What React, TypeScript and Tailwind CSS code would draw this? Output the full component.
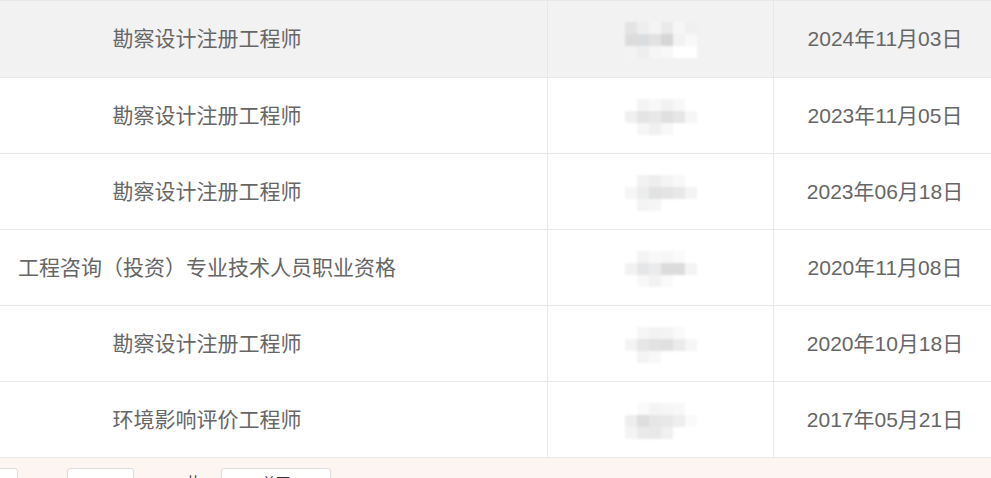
import React from "react";

const mosaics: string[][][] = [
  [
    ["#e4e4e4", "#eeeeee", "#f4f4f4", "#eaeaea", "#f6f6f6", "#f0f0f0"],
    ["#dcdcdc", "#dadde0", "#e2e2e2", "#d6d6d6", "#f2f2f2", "#f8f8f8"],
    ["#f3f3f3", "#eeeeee", "#f5f5f5", "#f8f8f8", "#ffffff", "#ffffff"],
  ],
  [
    ["#ffffff", "#f4f4f4", "#f8f8f8", "#f2f2f2", "#f8f8f8", "#ffffff"],
    ["#f0f0f0", "#e4e4e4", "#e8e8e8", "#e0e0e0", "#e6e6e6", "#f6f6f6"],
    ["#ffffff", "#f6f6f6", "#f0f0f0", "#f8f8f8", "#ffffff", "#ffffff"],
  ],
  [
    ["#ffffff", "#f2f2f2", "#eeeeee", "#f4f4f4", "#f8f8f8", "#ffffff"],
    ["#f6f6f6", "#ececec", "#e0e2e4", "#e4e4e4", "#e8e8e8", "#f4f4f4"],
    ["#ffffff", "#f4f4f4", "#f6f6f6", "#ffffff", "#ffffff", "#ffffff"],
  ],
  [
    ["#ffffff", "#f4f4f4", "#f8f8f8", "#f6f6f6", "#fafafa", "#ffffff"],
    ["#f2f2f2", "#e4e6e8", "#ebebeb", "#dcdcdc", "#dcdcdc", "#f4f4f4"],
    ["#ffffff", "#f8f8f8", "#f2f2f2", "#fafafa", "#ffffff", "#ffffff"],
  ],
  [
    ["#ffffff", "#f6f6f6", "#f2f2f2", "#f4f4f4", "#fafafa", "#ffffff"],
    ["#f4f4f4", "#e6e6e6", "#e2e2e2", "#e0e0e0", "#ebebeb", "#f6f6f6"],
    ["#ffffff", "#f4f4f4", "#f8f8f8", "#ffffff", "#ffffff", "#ffffff"],
  ],
  [
    ["#ffffff", "#fafafa", "#f4f4f4", "#f6f6f6", "#f8f8f8", "#ffffff"],
    ["#eeeeee", "#dedede", "#e6e6e6", "#e8e8e8", "#eeeeee", "#fafafa"],
    ["#f4f4f4", "#eaeaea", "#e8e8e8", "#f0f0f0", "#ffffff", "#ffffff"],
  ],
];

const rows = [
  { name: "勘察设计注册工程师", date: "2024年11月03日" },
  { name: "勘察设计注册工程师", date: "2023年11月05日" },
  { name: "勘察设计注册工程师", date: "2023年06月18日" },
  { name: "工程咨询（投资）专业技术人员职业资格", date: "2020年11月08日" },
  { name: "勘察设计注册工程师", date: "2020年10月18日" },
  { name: "环境影响评价工程师", date: "2017年05月21日" },
];

function Mosaic({ grid }: { grid: string[][] }) {
  return (
    <div className="grid grid-cols-6 w-[72px] blur-[1px]">
      {grid.flat().map((c, i) => (
        <div key={i} className="h-[12px]" style={{ backgroundColor: c }} />
      ))}
    </div>
  );
}

export default function App() {
  return (
    <div
      className="w-[991px] h-[478px] overflow-hidden bg-white text-[#666] text-[21px]"
      style={{ fontFamily: '"Liberation Sans", "Noto Sans CJK SC", sans-serif' }}
    >
      <div className="border-t border-[#e8e8e8]">
        {rows.map((r, i) => (
          <div
            key={i}
            className={`flex border-b border-[#e8e8e8] ${i === 0 ? "h-[77px] bg-[#f2f2f2]" : "h-[76px] bg-white"}`}
          >
            <div className="w-[548px] border-r border-[#e8e8e8] flex items-center justify-center pr-[133px] whitespace-nowrap">
              {r.name}
            </div>
            <div className="w-[226px] border-r border-[#e8e8e8] flex items-center justify-center pt-[2px]">
              <Mosaic grid={mosaics[i]} />
            </div>
            <div className="flex-1 flex items-center justify-center pl-[5px] whitespace-nowrap">
              {r.date}
            </div>
          </div>
        ))}
      </div>
      <div className="h-[30px] bg-[#fcf5f2] flex items-start pt-[10px] text-[14px] text-[#333]">
        <div className="ml-[-22px] w-[40px] h-[28px] bg-white border border-[#dcdcdc] rounded-[3px]" />
        <div className="ml-[49px] w-[67px] h-[28px] bg-white border border-[#dcdcdc] rounded-[3px]" />
        <div className="ml-[52px] w-[14px] pt-[7px] leading-none">共</div>
        <div className="ml-[21px] w-[110px] h-[28px] bg-white border border-[#dcdcdc] rounded-[3px] flex justify-center pt-[7px] leading-none">
          首页
        </div>
      </div>
    </div>
  );
}
